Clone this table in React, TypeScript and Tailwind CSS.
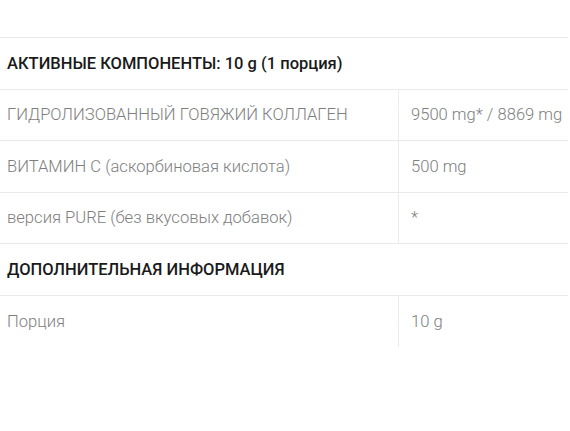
const rows1 = [
  { name: "ГИДРОЛИЗОВАННЫЙ ГОВЯЖИЙ КОЛЛАГЕН", value: "9500 mg* / 8869 mg" },
  { name: "ВИТАМИН C (аскорбиновая кислота)", value: "500 mg" },
  { name: "версия PURE (без вкусовых добавок)", value: "*" },
];

const rows2 = [{ name: "Порция", value: "10 g" }];

function HeaderRow({ title }: { title: string }) {
  return (
    <div className="h-[51.5px] flex items-center border-b border-[#e9e9e9] pl-[7px] pt-[3px] text-[16.5px] font-medium text-[#1a1a1a]">
      {title}
    </div>
  );
}

function DataRow({ name, value, last }: { name: string; value: string; last?: boolean }) {
  return (
    <div className={`h-[51.5px] flex text-[16.6px] font-light text-[#7e7e7e] ${last ? "" : "border-b border-[#e9e9e9]"}`}>
      <div className="w-[399px] flex items-center pl-[7px] pt-[2px] border-r border-[#ececec]">{name}</div>
      <div className="flex-1 flex items-center pl-[12px] pt-[2px]">{value}</div>
    </div>
  );
}

export default function App() {
  return (
    <div className="w-[570px] h-[431px] bg-white overflow-hidden font-['Roboto',sans-serif]">
      <div className="h-[37px]" />
      <div className="w-[568px] border-t border-[#e9e9e9]">
        <HeaderRow title="АКТИВНЫЕ КОМПОНЕНТЫ: 10 g (1 порция)" />
        {rows1.map((r) => (
          <DataRow key={r.name} name={r.name} value={r.value} />
        ))}
        <HeaderRow title="ДОПОЛНИТЕЛЬНАЯ ИНФОРМАЦИЯ" />
        {rows2.map((r) => (
          <DataRow key={r.name} name={r.name} value={r.value} last />
        ))}
      </div>
    </div>
  );
}
